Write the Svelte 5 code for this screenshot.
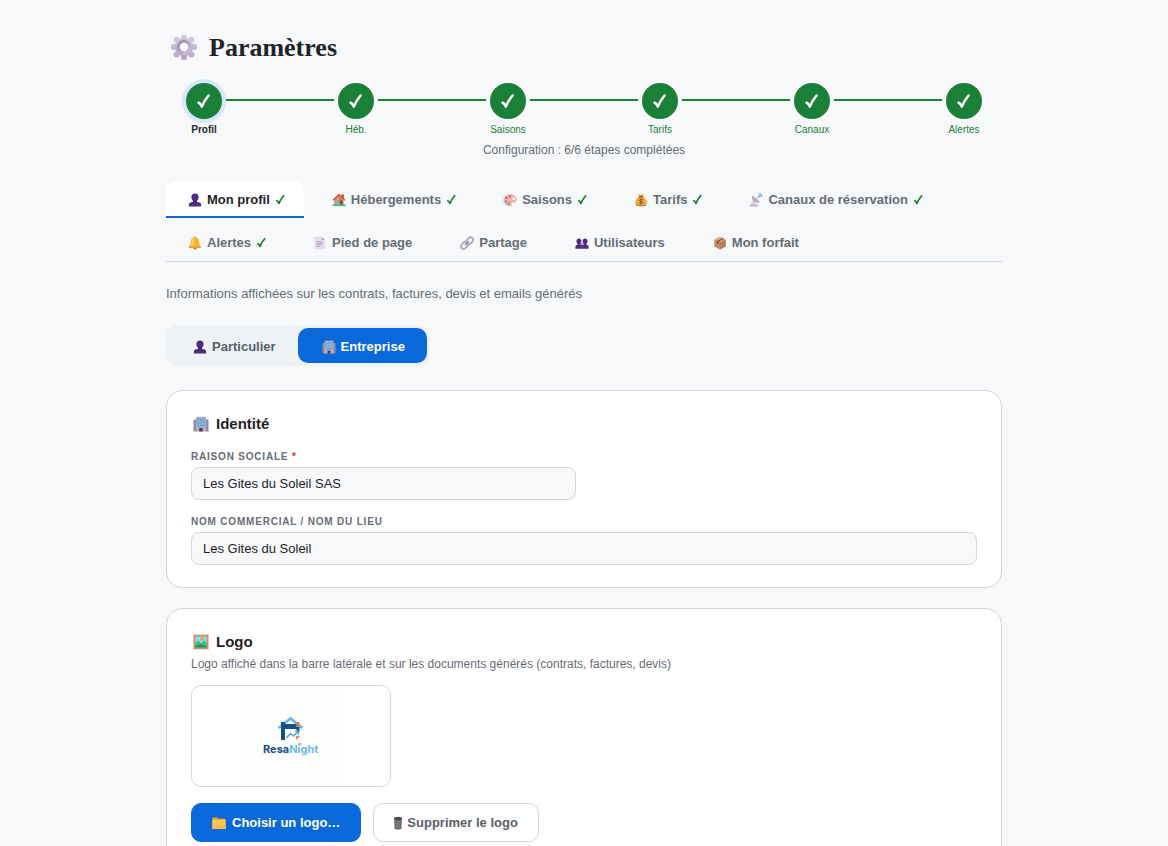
<script>
	const steps = ['Profil', 'Héb.', 'Saisons', 'Tarifs', 'Canaux', 'Alertes']

	const tabs = [
		{ id: 'profil', icon: 'user', label: 'Mon profil', done: true },
		{ id: 'hebergements', icon: 'house', label: 'Hébergements', done: true },
		{ id: 'saisons', icon: 'palette', label: 'Saisons', done: true },
		{ id: 'tarifs', icon: 'money', label: 'Tarifs', done: true },
		{ id: 'canaux', icon: 'antenna', label: 'Canaux de réservation', done: true },
		{ id: 'alertes', icon: 'bell', label: 'Alertes', done: true },
		{ id: 'pied', icon: 'page', label: 'Pied de page' },
		{ id: 'partage', icon: 'link', label: 'Partage' },
		{ id: 'utilisateurs', icon: 'users', label: 'Utilisateurs' },
		{ id: 'forfait', icon: 'box', label: 'Mon forfait' }
	]

	let activeTab = $state('profil')
	let kind = $state('entreprise')
	let raisonSociale = $state('Les Gites du Soleil SAS')
	let nomCommercial = $state('Les Gites du Soleil')
</script>

{#snippet check()}
	<svg class="check" viewBox="0 0 16 16" aria-hidden="true">
		<path d="M2.600 9.800 Q4.600 10.500 5.800 13.600 Q8.600 7 12.600 2.500" fill="none" stroke="currentColor" stroke-width="2.500" stroke-linecap="round" stroke-linejoin="round" />
	</svg>
{/snippet}

{#snippet icon(name)}
	<svg class="icon" viewBox="0 0 16 16" aria-hidden="true">
		{#if name === 'user'}
			<path d="M1 15.500v-2c0-1.800 1.200-2.500 3-2.900l2-.5V9C4.500 8.200 3.900 6.600 3.900 4.600 3.900 2.100 5.500.5 8 .5s4.100 1.600 4.100 4.100c0 2-.6 3.600-2.100 4.400v1.100l2 .5c1.800.4 3 1.100 3 2.900v2z" fill="#4b2d7f" />
			<path d="M6 9.200c1.300.7 2.700.7 4 0v1.200c-1.300.9-2.700.9-4 0z" fill="#36205f" />
		{:else if name === 'users'}
			<path d="M.5 14.500v-2c0-1.500.8-2 2.500-2.400V9C2 8 1.700 7 1.700 5.600 1.700 3.800 2.800 2.800 4.500 2.800s2.800 1 2.800 2.800c0 1.400-.3 2.400-1.300 3.400v1l2 .4 2-.4V9C9 8 8.700 7 8.700 5.600c0-1.800 1.100-2.800 2.800-2.800s2.800 1 2.800 2.800c0 1.400-.3 2.400-1.300 3.400v1.100c1.700.4 2.500.9 2.500 2.400v2z" fill="#4b2d7f" />
			<path d="M6 8.500h4v1.200H6zM7.600 10.800h.8v3.700h-.8z" fill="#7654a3" />
		{:else if name === 'house'}
			<path d="M11 1.500h2.500v5H11z" fill="#8d5a4c" />
			<path d="M2.500 7 8 2l5.500 5v7h-11z" fill="#d79a72" />
			<path d="M8 3.500 12.500 8v6H8z" fill="#c58661" />
			<path d="M.7 7.600 7.400 1.200h1.200l6.700 6.400-1.100 1.200L8 3.400 1.800 8.800z" fill="#df5139" />
			<path d="M4 8.500h3.500v3H4z" fill="#5cb6e8" />
			<path d="M9.200 8.500h2.600V14H9.200z" fill="#6e4a4b" />
			<path d="M.5 13h15v2H.5z" fill="#48bd73" />
		{:else if name === 'palette'}
			<path d="M8.500 1.500C3.700 1.500.5 4.400.5 8.300c0 3.900 3.500 6.700 7.500 6.700 2.200 0 2.500-1.300 1.900-2.300-.5-1 .1-2 1.500-1.700 2.400.5 4.200-.8 4.200-3.200 0-3.600-3-6.300-7.100-6.300z" fill="#f8b0a8" />
			<circle cx="4" cy="5.600" r="1.300" fill="#d6448e" />
			<circle cx="8" cy="3.900" r="1.200" fill="#9a4fc7" />
			<circle cx="3.300" cy="9.600" r="1.200" fill="#3f91e8" />
			<circle cx="6.600" cy="12" r="1.300" fill="#35aca0" />
			<ellipse cx="12.200" cy="6.800" rx="1.700" ry="1.300" fill="#fff0ec" />
		{:else if name === 'money'}
			<path d="M5 .8 8 2l3-1.200-.8 3.400C13.400 5.800 15 9 14.500 12c-.3 2.300-2 3-6.500 3s-6.200-.7-6.500-3C1 9 2.600 5.800 5.800 4.200z" fill="#f2a93b" />
			<path d="M1.600 12c.7 1.400 2.400 1.700 6.400 1.700s5.700-.3 6.400-1.700c-.3 2.500-2 3.200-6.400 3.200S2 14.500 1.600 12z" fill="#c37632" />
			<path d="M5.600 4.200h4.800" stroke="#8c5636" stroke-width="1.500" />
			<path d="M10 7.600C8.500 6.700 6.300 7 6.300 8.400s3.600 1 3.600 2.500-2.400 1.600-3.900.7M8 6.300v6.700" fill="none" stroke="#79502d" stroke-width="1.100" />
		{:else if name === 'antenna'}
			<path d="M4 2.800 12.500 10c-2 1.700-5 1.600-7-.2S2.700 5 4 2.800z" fill="#b9aac6" />
			<path d="m8 6.600 3-3" stroke="#8c8196" stroke-width="1" />
			<path d="M3.500 9.200 2 13.500h7.500L7.500 10.500z" fill="#d8cfe0" />
			<path d="M1 13.300h9.500v2H1z" fill="#c0a9d2" />
			<path d="M11 .8c2.300-.2 4 1.500 3.800 3.800M11 3c1.200 0 1.800.7 1.800 1.800" fill="none" stroke="#5f96ed" stroke-width="1.200" />
		{:else if name === 'bell'}
			<circle cx="8" cy="2" r="1.300" fill="#e39134" />
			<path d="M8 1.500c3.200 0 4.600 2.300 4.800 5.300.2 2.500.8 4 2 5.200v1.500H1.200V12c1.200-1.200 1.800-2.700 2-5.200.2-3 1.600-5.300 4.800-5.300z" fill="#fab32f" />
			<path d="M4.500 6c.2-2 1-3 2.500-3.500L6 11H3.500c.7-1.500.9-3 1-5z" fill="#ffd665" />
			<path d="M1.200 12h13.600v1.500H1.200z" fill="#ef9730" />
			<path d="M6 13.500h4c-.2 1.300-.8 2-2 2s-1.800-.7-2-2z" fill="#bf713d" />
		{:else if name === 'page'}
			<path d="M1.500.8H10L14 4.500v10.700H1.500z" fill="#e5dced" />
			<path d="M10 .8 14 4.500h-4z" fill="#bdaccb" />
			<path d="M4 6.500h6.500M4 9h7M4 11.500h4.500" stroke="#a594b3" stroke-width="1.200" />
		{:else if name === 'link'}
			<g fill="none" stroke="#b3a5bf" stroke-width="2">
				<rect x="6.500" y="2.700" width="9" height="5.800" rx="2.900" transform="rotate(-45 11 5.600)" />
				<rect x=".7" y="7.700" width="9" height="5.800" rx="2.900" transform="rotate(-45 5.200 10.600)" />
			</g>
			<path d="m5.700 10.200 4.600-4.600" stroke="#988ba3" stroke-width="1.500" />
		{:else if name === 'box'}
			<path d="M8 .8 14.500 4v8L8 15.300 1.500 12V4z" fill="#c68662" />
			<path d="M8 .8 14.500 4 8 7.300 1.500 4z" fill="#e0ac84" />
			<path d="M8 7.300 14.500 4v8L8 15.300z" fill="#b97b5b" />
			<path d="m11 2.300 1.700.9-6.500 3.300v3l-1.700-.9v-3z" fill="#805049" />
		{:else if name === 'building'}
			<path d="M.5 3.500h3v12h-3zM12.500 3.500h3v12h-3z" fill="#938b9c" />
			<path d="M3 .8h10v14.700H3z" fill="#b9adc0" />
			<path d="M4.500 2.500h1.800v2H4.500zM7.100 2.500h1.800v2H7.100zM9.700 2.500h1.800v2H9.700zM4.500 5.500h1.800v2H4.500zM7.100 5.500h1.800v2H7.100zM9.700 5.500h1.800v2H9.700zM4.500 8.500h1.800v2H4.500zM7.100 8.500h1.800v2H7.100zM9.700 8.500h1.800v2H9.700zM1 5h1.200v2H1zM1 9h1.200v2H1zM13.800 5H15v2h-1.200zM13.800 9H15v2h-1.200z" fill="#3db0f2" />
			<path d="M6.300 12h3.400v3.500H6.300z" fill="#493b50" />
		{:else if name === 'picture'}
			<path d="M.5.700h15v14.600H.5z" fill="#d08c66" />
			<path d="M2.200 2.400h11.600v11.200H2.200z" fill="#8bd6f6" />
			<circle cx="9" cy="5" r="1.700" fill="#f99a2b" />
			<path d="M2.200 9 5.200 6.500l3 3L11 6.500l2.800 2.500v4.600H2.200z" fill="#3fbd76" />
			<path d="M2.200 12 7 10.300l6.800 2v1.300H2.200z" fill="#26955e" />
		{:else if name === 'folder'}
			<path d="M.5 1.700h5.300l1.400 1.500h8.300v11.700H.5z" fill="#f3a638" />
			<path d="M.5 4.500h15v10.400H.5z" fill="#fdc94b" />
			<path d="M.5 11h15v3.900H.5z" fill="#fbb85a" />
		{:else if name === 'trash'}
			<path d="M3.500 2.500h9l-.6 11.800c-.2 1.500-7.600 1.500-7.800 0z" fill="#65616a" />
			<path d="M5.200 5h.8l.3 9h-.8zM7.600 5h.8v9h-.8zM10 5h.8l-.3 9h-.8z" fill="#98939b" />
			<ellipse cx="8" cy="2.700" rx="4.600" ry="1.900" fill="#4c4850" />
		{/if}
	</svg>
{/snippet}

<main class="page">
	<h1>
		<svg class="gear" viewBox="0 0 28 28" aria-hidden="true">
			<defs>
				<linearGradient id="gear-body" gradientUnits="userSpaceOnUse" x1="14" y1="1" x2="14" y2="27">
					<stop offset="0" stop-color="#d5cbe1" />
					<stop offset="1" stop-color="#b6a1cb" />
				</linearGradient>
				<linearGradient id="gear-ring" x1="0" y1="0" x2="1" y2="1">
					<stop offset="0" stop-color="#978da0" />
					<stop offset="1" stop-color="#cbc0d5" />
				</linearGradient>
			</defs>
			<g fill="url(#gear-body)">
				<circle cx="14" cy="3.500" r="2.900" />
				<circle cx="21.400" cy="5.600" r="2.900" />
				<circle cx="24.200" cy="13" r="2.900" />
				<circle cx="21.400" cy="20.400" r="2.900" />
				<circle cx="14" cy="23.200" r="2.900" />
				<circle cx="6.600" cy="20.400" r="2.900" />
				<circle cx="3.800" cy="13" r="2.900" />
				<circle cx="6.600" cy="5.600" r="2.900" />
				<circle cx="14" cy="13" r="9.300" />
			</g>
			<circle cx="14" cy="13" r="5.700" fill="#f6f8fa" stroke="url(#gear-ring)" stroke-width="3" />
		</svg>
		Paramètres
	</h1>

	<ol class="stepper">
		{#each steps as step, index}
			{#if index > 0}
				<li class="line" aria-hidden="true"></li>
			{/if}
			<li class="step" class:current={index === 0}>
				<span class="dot">{@render check()}</span>
				<span class="step-label">{step}</span>
			</li>
		{/each}
	</ol>
	<p class="progress">Configuration : 6/6 étapes complétées</p>

	<nav class="tabs">
		{#each tabs as tab (tab.id)}
			<button class="tab" class:active={activeTab === tab.id} class:completed={tab.done} onclick={() => (activeTab = tab.id)}>
				{@render icon(tab.icon)}
				{tab.label}
				{#if tab.done}
					<span class="done">{@render check()}</span>
				{/if}
			</button>
		{/each}
	</nav>

	<p class="intro">Informations affichées sur les contrats, factures, devis et emails générés</p>

	<div class="toggle">
		<button class:selected={kind === 'particulier'} onclick={() => (kind = 'particulier')}>
			{@render icon('user')}
			Particulier
		</button>
		<button class:selected={kind === 'entreprise'} onclick={() => (kind = 'entreprise')}>
			{@render icon('building')}
			Entreprise
		</button>
	</div>

	<section class="card">
		<h2>{@render icon('building')} Identité</h2>
		<div class="fields">
			<div class="field">
				<label for="raison">Raison sociale <span class="required">*</span></label>
				<input id="raison" type="text" bind:value={raisonSociale} />
			</div>
			<div class="field wide">
				<label for="nom">Nom commercial / Nom du lieu</label>
				<input id="nom" type="text" bind:value={nomCommercial} />
			</div>
		</div>
	</section>

	<section class="card">
		<h2>{@render icon('picture')} Logo</h2>
		<p class="hint">Logo affiché dans la barre latérale et sur les documents générés (contrats, factures, devis)</p>
		<div class="preview">
			<svg class="logo" viewBox="0 0 100 100" role="img" aria-label="ResaNight">
				<rect width="100" height="100" fill="#fefefe" />
				<path d="M37.500 42 49.500 32.500 61.500 42" fill="none" stroke="#64b9e5" stroke-width="2.600" />
				<path d="M55.500 36h2.800v5h-2.800z" fill="#ef7b35" />
				<path d="M40 36h4v18h-4z" fill="#174f86" />
				<path d="M40 38h15.500v5H40zM55.500 41h3v5h-3z" fill="#174f86" />
				<path d="m45.500 52 4-4.500 3 2.500 4.500-4.500M54 45.300h3.300v3.300" fill="none" stroke="#4eafe0" stroke-width="1.600" />
				<path d="m55 50 4 .3-3.500 3.700z" fill="#ef7b35" />
				<path d="M57 58.500q1.800-2.200 3.800 0" fill="none" stroke="#ef7b35" stroke-width="1" />
				<text x="22" y="67" class="logo-text">Resa<tspan fill="#6bbce4">Night</tspan></text>
			</svg>
		</div>
		<div class="actions">
			<button class="btn primary">{@render icon('folder')} Choisir un logo…</button>
			<button class="btn">{@render icon('trash')} Supprimer le logo</button>
		</div>
	</section>
</main>

<style>
:global(body) {
	margin: 0;
	background: #f6f8fa;
}
* {
	box-sizing: border-box;
}
h1, h2, p, ol {
	margin: 0;
}
button, input {
	font: inherit;
}
button {
	cursor: pointer;
}
.page {
	max-width: 900px;
	margin: 0 auto;
	padding: 32px;
	color: #1f2328;
	font-family: "Liberation Sans", Arial, sans-serif;
	font-size: 13px;
	line-height: 15px;
}
h1 {
	display: flex;
	align-items: center;
	gap: 11px;
	padding-left: 4px;
	font-family: "Liberation Serif", "Times New Roman", serif;
	font-size: 26px;
	line-height: 31px;
}
.gear {
	width: 28px;
	height: 28px;
}
.icon {
	flex: none;
	width: 14px;
	height: 14px;
}
.check {
	display: block;
	width: 100%;
	height: 100%;
}
.stepper {
	display: flex;
	align-items: flex-start;
	margin-top: 20px;
	padding: 0 16px;
	list-style: none;
}
.step {
	display: flex;
	flex-direction: column;
	align-items: center;
	gap: 5px;
	width: 44px;
	color: #1a7f37;
	font-size: 10px;
	line-height: 12px;
}
.dot {
	width: 36px;
	height: 36px;
	padding: 10px;
	border-radius: 50%;
	background: #1a7f37;
	color: #fff;
}
.current .dot {
	box-shadow: 0 0 0 4px #d6e7fa;
}
.current .step-label {
	color: #1f2328;
	font-weight: bold;
}
.line {
	flex: 1;
	height: 2px;
	margin-top: 16px;
	background: #1a7f37;
}
.progress {
	margin-top: 7px;
	color: #656d76;
	font-size: 12px;
	line-height: 14px;
	text-align: center;
}
.tabs {
	display: flex;
	flex-wrap: wrap;
	gap: 6px;
	margin-top: 24px;
	border-bottom: 1px solid #d0d7de;
}
.tab {
	display: flex;
	align-items: center;
	gap: 5px;
	padding: 11px 20px 9px 22px;
	border: 0;
	border-bottom: 2px solid transparent;
	border-radius: 10px 10px 0 0;
	background: none;
	color: #656d76;
	font-weight: bold;
}
.tab.completed {
	padding-right: 18px;
}
.tab.active {
	border-bottom-color: #0969da;
	background: #fff;
	color: #1f2328;
}
.done {
	width: 11px;
	height: 11px;
	color: #1a7f37;
}
.intro {
	margin-top: 24px;
	color: #656d76;
}
.toggle {
	display: inline-flex;
	margin-top: 24px;
	padding: 3px;
	border-radius: 12px;
	background: #eff2f5;
}
.toggle button {
	display: flex;
	align-items: center;
	gap: 5px;
	padding: 11px 22px 9px 24px;
	border: 0;
	border-radius: 10px;
	background: none;
	color: #57606a;
	font-weight: bold;
}
.toggle .selected {
	background: #0969da;
	color: #fff;
}
.card {
	margin-top: 20px;
	padding: 24px 24px 22px;
	border: 1px solid #d0d7de;
	border-radius: 16px;
	background: #fff;
}
.toggle + .card {
	margin-top: 24px;
}
h2 {
	display: flex;
	align-items: center;
	gap: 7px;
	padding-left: 2px;
	font-size: 15px;
	line-height: 18px;
}
h2 .icon {
	width: 16px;
	height: 16px;
}
.fields {
	display: grid;
	grid-template-columns: 1fr 1fr;
	gap: 16px;
	margin-top: 18px;
}
.field {
	display: flex;
	flex-direction: column;
	gap: 4px;
}
.wide {
	grid-column: 1 / -1;
}
label {
	color: #656d76;
	font-size: 10px;
	font-weight: bold;
	letter-spacing: 0.08em;
	line-height: 12px;
	text-transform: uppercase;
}
.required {
	color: #e5342b;
}
input {
	width: 100%;
	padding: 8px 11px;
	border: 1px solid #d0d7de;
	border-radius: 8px;
	background: #f6f8fa;
	color: #1f2328;
	line-height: 15px;
}
.hint {
	margin-top: 6px;
	color: #656d76;
	font-size: 12px;
	line-height: 14px;
}
.preview {
	display: flex;
	justify-content: center;
	max-width: 200px;
	margin-top: 14px;
	border: 1px solid #d0d7de;
	border-radius: 10px;
}
.logo {
	width: 100px;
	height: 100px;
}
.logo-text {
	fill: #174f86;
	font-family: Inter, "Open Sans", sans-serif;
	font-size: 11px;
	font-weight: bold;
}
.actions {
	display: flex;
	gap: 12px;
	margin-top: 16px;
}
.btn {
	display: flex;
	align-items: center;
	gap: 2px;
	padding: 11px 20px 11px 17px;
	border: 1px solid #d0d7de;
	border-radius: 10px;
	background: #fff;
	color: #57606a;
	font-weight: bold;
}
.btn.primary {
	gap: 6px;
	padding-left: 20px;
	border-color: #0969da;
	background: #0969da;
	color: #fff;
}
</style>
